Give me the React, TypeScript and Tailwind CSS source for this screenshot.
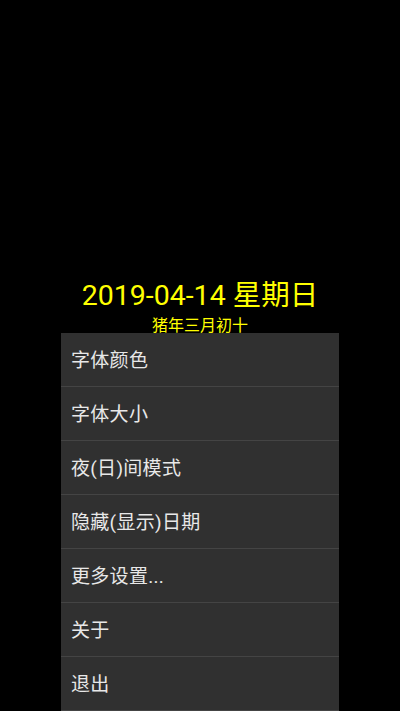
import React from 'react';

const menuItems = ['字体颜色', '字体大小', '夜(日)间模式', '隐藏(显示)日期', '更多设置...', '关于', '退出'];

export default function App() {
  return (
    <div
      className="relative h-[711px] w-full overflow-hidden bg-black"
      style={{ fontFamily: 'Roboto, "Noto Sans CJK SC", sans-serif' }}
    >
      <div className="flex flex-col items-center pt-[282px]">
        <div className="text-[28.5px] leading-none text-[#ffff00] whitespace-nowrap">2019-04-14 星期日</div>
        <div className="mt-[7px] text-[16px] leading-none text-[#ffff00]">猪年三月初十</div>
      </div>

      <div className="absolute left-[61px] top-[333px] w-[278px] bg-[#303030] shadow-lg">
        {menuItems.map((item) => (
          <div
            key={item}
            className="flex h-[54px] items-center border-b border-[#444444] pl-[10px] pt-[3px] text-[19px] tracking-[0.3px] text-[#e8e8e8]"
          >
            {item}
          </div>
        ))}
      </div>
    </div>
  );
}
